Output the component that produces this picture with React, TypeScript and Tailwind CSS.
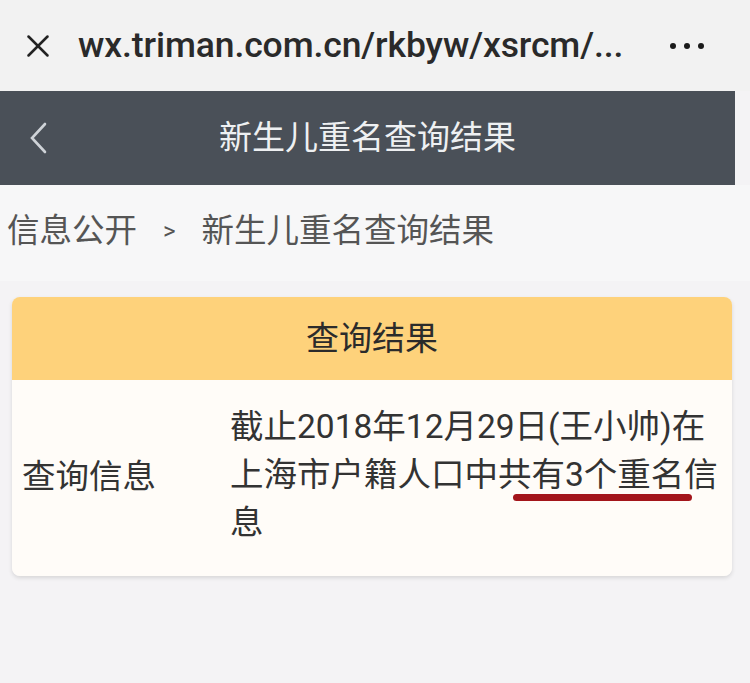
import { X } from 'lucide-react'

const font = "font-['Roboto','Noto_Sans_CJK_SC',sans-serif]"

function BrowserBar() {
  return (
    <div className="flex h-[91px] items-center bg-[#f2f2f2]">
      <X className="ml-[19px] size-[38px] text-[#222]" strokeWidth={1.6} />
      <span className="ml-[21px] text-[35.5px] font-medium tracking-[-0.1px] text-[#2a2a2a]">
        wx.triman.com.cn/rkbyw/xsrcm/...
      </span>
      <div className="ml-auto mr-[46px] flex items-center gap-[8px]">
        <span className="size-[6px] rounded-full bg-[#1a1a1a]" />
        <span className="size-[6px] rounded-full bg-[#1a1a1a]" />
        <span className="size-[6px] rounded-full bg-[#1a1a1a]" />
      </div>
    </div>
  )
}

function TitleBar() {
  return (
    <div className="relative flex h-[94px] w-[735px] items-center justify-center bg-[#4a5058]">
      <svg
        className="absolute left-[26px] top-[30px]"
        width="24"
        height="34"
        viewBox="0 0 24 34"
        fill="none"
      >
        <polyline points="19,3 6,17 19,31" stroke="#cfd3d8" strokeWidth="2.6" strokeLinecap="round" />
      </svg>
      <span className="text-[33px] text-[#eef0f2]">新生儿重名查询结果</span>
    </div>
  )
}

export default function App() {
  return (
    <div className={`${font} min-h-[683px] w-[750px] bg-[#f4f3f5]`}>
      <BrowserBar />
      <TitleBar />

      <div className="flex h-[96px] items-center bg-[#f7f7f8] pl-[7px] pb-[4px] text-[32.5px] text-[#555]">
        <span>信息公开</span>
        <span className="mx-[26px] text-[24px]">&gt;</span>
        <span>新生儿重名查询结果</span>
      </div>

      <div className="ml-[12px] mt-[16px] w-[720px] overflow-hidden rounded-[8px] shadow-[0_2px_4px_rgba(0,0,0,0.12)]">
        <div className="flex h-[83px] items-center justify-center bg-[#fed27b] text-[33px] text-[#2b2b2b]">
          查询结果
        </div>
        <div className="flex h-[196px] items-center bg-[#fffcf8] text-[33.5px] text-[#333]">
          <div className="w-[218px] pl-[10px] pb-[2px]">查询信息</div>
          <div className="pb-[6px] leading-[48px] whitespace-nowrap">
            <div>截止2018年12月29日(王小帅)在</div>
            <div className="flex">
              <span>上海市户籍人口中</span>
              <span className="relative">
                共有3个重名
                <span className="absolute left-[15px] top-[43px] h-[7px] w-[179px] rounded-full bg-[#a3151b]" />
              </span>
              <span>信</span>
            </div>
            <div>息</div>
          </div>
        </div>
      </div>
    </div>
  )
}
